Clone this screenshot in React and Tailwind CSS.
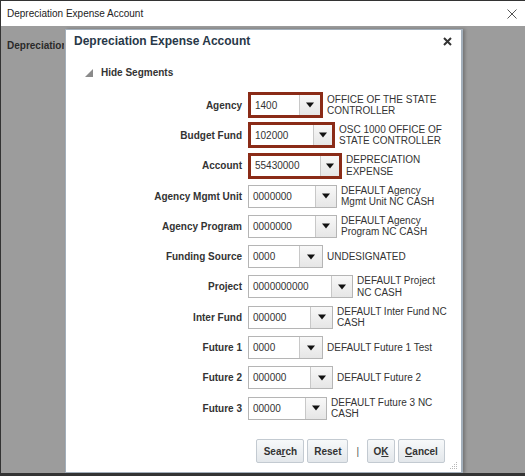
import React from 'react';

// Segment rows of the account picker
const segments = [
  { label: 'Agency', value: '1400', inputW: 51, btnW: 24, desc: ['OFFICE OF THE STATE', 'CONTROLLER'], flagged: true },
  { label: 'Budget Fund', value: '102000', inputW: 65, btnW: 22, desc: ['OSC 1000 OFFICE OF', 'STATE CONTROLLER'], flagged: true },
  { label: 'Account', value: '55430000', inputW: 72, btnW: 22, desc: ['DEPRECIATION', 'EXPENSE'], flagged: true },
  { label: 'Agency Mgmt Unit', value: '0000000', inputW: 67, btnW: 22, desc: ['DEFAULT Agency', 'Mgmt Unit NC CASH'] },
  { label: 'Agency Program', value: '0000000', inputW: 67, btnW: 22, desc: ['DEFAULT Agency', 'Program NC CASH'] },
  { label: 'Funding Source', value: '0000', inputW: 51, btnW: 24, desc: ['UNDESIGNATED'] },
  { label: 'Project', value: '0000000000', inputW: 83, btnW: 22, desc: ['DEFAULT Project', 'NC CASH'] },
  { label: 'Inter Fund', value: '000000', inputW: 62, btnW: 23, desc: ['DEFAULT Inter Fund NC', 'CASH'] },
  { label: 'Future 1', value: '0000', inputW: 51, btnW: 24, desc: ['DEFAULT Future 1 Test'] },
  { label: 'Future 2', value: '000000', inputW: 62, btnW: 23, desc: ['DEFAULT Future 2'] },
  { label: 'Future 3', value: '00000', inputW: 57, btnW: 22, desc: ['DEFAULT Future 3 NC', 'CASH'] },
];

const DownArrow = () => (
  <svg width="8" height="6" viewBox="0 0 8 6">
    <polygon points="0,0.5 8,0.5 4,5.5" fill="#111" />
  </svg>
);

const SegmentField = ({ seg }) => {
  const outer = seg.flagged
    ? 'border-[3px] border-[#8a2b17] h-[26px]'
    : 'border border-[#b5b5b5] h-[23px]';
  return (
    <div className={`flex ${outer} bg-white`}>
      <div
        className="flex items-center pl-[4px] text-[10px] text-[#333]"
        style={{ width: seg.inputW - (seg.flagged ? 3 : 1) }}
      >
        {seg.value}
      </div>
      <div
        className="flex items-center justify-center border-l border-[#c8c8c8] bg-gradient-to-b from-[#f8f8f8] to-[#e6e6e6]"
        style={{ width: seg.btnW - (seg.flagged ? 3 : 1) }}
      >
        <DownArrow />
      </div>
    </div>
  );
};

const DialogButton = ({ children, w }) => (
  <button
    className={`${w} h-[24px] rounded-[2px] border border-[#c3cad1] bg-gradient-to-b from-[#f7f9fa] to-[#e3e7eb] text-[10px] font-bold text-[#333]`}
  >
    {children}
  </button>
);

export default function App() {
  return (
    <div
      className="w-[525px] h-[476px] flex flex-col border-l border-t border-b-[3px] border-[#333] bg-white overflow-hidden"
      style={{ fontFamily: '"Liberation Sans", Arial, sans-serif' }}
    >
      {/* Window title bar */}
      <div className="h-[25px] shrink-0 flex items-center justify-between pl-[6px] pr-[8px] bg-white">
        <span className="text-[10px] text-[#222]">Depreciation Expense Account</span>
        <svg width="10" height="10" viewBox="0 0 10 10">
          <path d="M0.5 0.5 L9.5 9.5 M9.5 0.5 L0.5 9.5" stroke="#555" strokeWidth="1" />
        </svg>
      </div>

      {/* Greyed-out page */}
      <div className="relative flex-1 bg-[#9c9c9c]">
        <div className="ml-[6px] mt-[12px] w-[57px] overflow-hidden whitespace-nowrap text-[10px] font-bold text-[#2a2a2a]">
          Depreciation
        </div>

        {/* Modal dialog */}
        <div className="absolute left-[64px] top-[3px] bottom-0 w-[398px] bg-white border border-r-2 border-[#a3afbb] shadow-[2px_0_3px_rgba(0,0,0,0.25)] flex flex-col">
          <div className="flex items-center justify-between pl-[8px] pr-[9px] pt-[4px]">
            <span className="text-[12px] leading-[14px] font-bold text-[#283848]">Depreciation Expense Account</span>
            <svg width="9" height="9" viewBox="0 0 9 9">
              <path d="M1 1 L8 8 M8 1 L1 8" stroke="#333" strokeWidth="2" />
            </svg>
          </div>

          <div className="flex items-center mt-[19px] pl-[19px] gap-[8px]">
            <svg width="8" height="8" viewBox="0 0 8 8">
              <polygon points="8,0 8,8 0,8" fill="#8a8a8a" />
            </svg>
            <span className="text-[10px] leading-[12px] font-bold text-[#333]">Hide Segments</span>
          </div>

          <div className="mt-[11px] flex flex-col">
            {segments.map((seg) => (
              <div key={seg.label} className="h-[30.3px] flex items-center">
                <div className="w-[176px] shrink-0 text-right text-[10px] font-bold text-[#333]">{seg.label}</div>
                <div className="ml-[6px]">
                  <SegmentField seg={seg} />
                </div>
                <div className="ml-[4px] text-[10px] leading-[11.5px] text-[#333] whitespace-nowrap">
                  {seg.desc.map((line) => (
                    <div key={line}>{line}</div>
                  ))}
                </div>
              </div>
            ))}
          </div>

          <div className="mt-[16px] flex items-center justify-end pr-[16px]">
            <div className="flex items-center gap-[3px]">
              <DialogButton w="w-[48px]">Sea<u>r</u>ch</DialogButton>
              <DialogButton w="w-[41px]">Reset</DialogButton>
            </div>
            <span className="mx-[8px] text-[10px] text-[#555]">|</span>
            <div className="flex items-center gap-[3px]">
              <DialogButton w="w-[28px]">O<u>K</u></DialogButton>
              <DialogButton w="w-[47px]"><u>C</u>ancel</DialogButton>
            </div>
          </div>

          {/* Resize grip */}
          <svg className="absolute right-[3px] bottom-[3px]" width="8" height="8" viewBox="0 0 8 8">
            <g fill="#b8b8b8">
              <rect x="6" y="1" width="1" height="1" />
              <rect x="4" y="3" width="1" height="1" />
              <rect x="6" y="3" width="1" height="1" />
              <rect x="2" y="5" width="1" height="1" />
              <rect x="4" y="5" width="1" height="1" />
              <rect x="6" y="5" width="1" height="1" />
              <rect x="0" y="7" width="1" height="1" />
              <rect x="2" y="7" width="1" height="1" />
              <rect x="4" y="7" width="1" height="1" />
              <rect x="6" y="7" width="1" height="1" />
            </g>
          </svg>
        </div>
      </div>
    </div>
  );
}
